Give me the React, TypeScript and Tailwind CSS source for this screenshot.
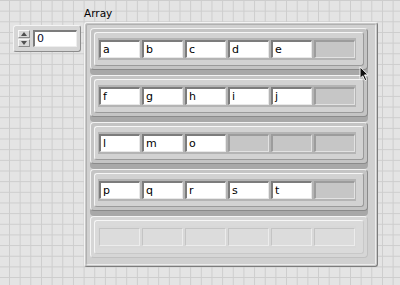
import React from "react";

const rows: (string | null)[][] = [
  ["a", "b", "c", "d", "e", null],
  ["f", "g", "h", "i", "j", null],
  ["l", "m", "o", null, null, null],
  ["p", "q", "r", "s", "t", null],
];

const Field = ({ text, dim }: { text: string | null; dim?: boolean }) => {
  if (dim) {
    return (
      <div className="w-[43px] h-[22px] px-[1px] py-[2px] bg-[#d8d8d8]">
        <div className="h-full border-t border-l border-[#c4c4c4] border-b border-r border-b-[#ececec] border-r-[#ececec] bg-[#dcdcdc]" />
      </div>
    );
  }
  return (
    <div className="w-[43px] h-[22px] px-[1px] py-[2px] bg-[#b4b4b4]">
      {text === null ? (
        <div className="h-full border-t-2 border-l-2 border-[#9c9c9c] border-b border-r border-b-[#e2e2e2] border-r-[#e2e2e2] bg-[#c6c6c6]" />
      ) : (
        <div className="h-full border-t-2 border-l-2 border-[#7c7c7c] border-b border-r border-b-[#e8e8e8] border-r-[#e8e8e8] bg-white pl-[2px] text-[11px] leading-[15px] text-black">
          {text}
        </div>
      )}
    </div>
  );
};

const Cluster = ({ items, dim }: { items: (string | null)[]; dim?: boolean }) => (
  <div
    className={
      dim
        ? "w-[278px] h-[42px] rounded-[4px] border border-[#f4f4f4] border-b-[#c0c0c0] border-r-[#c0c0c0] bg-[#d6d6d6] p-[3px]"
        : "w-[278px] h-[42px] rounded-[4px] border border-[#f2f2f2] border-b-[#8a8a8a] border-r-[#8a8a8a] bg-[#c4c4c4] p-[3px] shadow-[0_5px_0_#a8a8a8]"
    }
  >
    <div
      className={
        dim
          ? "h-full rounded-[3px] border border-[#f6f6f6] border-b-[#c8c8c8] border-r-[#c8c8c8] bg-[#dadada] flex items-center pl-[3px]"
          : "h-full rounded-[3px] border border-[#f6f6f6] border-b-[#9a9a9a] border-r-[#9a9a9a] bg-[#d2d2d2] flex items-center pl-[3px]"
      }
    >
      {items.map((t, i) => (
        <Field key={i} text={t} dim={dim} />
      ))}
    </div>
  </div>
);

export default function App() {
  return (
    <div
      className="relative w-[400px] h-[285px] overflow-hidden bg-[#e4e4e4] bg-[linear-gradient(to_right,#cdcdcd_1px,transparent_1px),linear-gradient(to_bottom,#cdcdcd_1px,transparent_1px)] bg-[size:10.67px_10.67px] bg-[position:9px_0px]"
      style={{ fontFamily: '"DejaVu Sans", "Liberation Sans", sans-serif' }}
    >
      <div className="flex items-start">
        {/* Index display */}
        <div className="ml-[13px] mt-[25px] w-[68px] h-[27px] rounded-[3px] border border-[#f4f4f4] border-b-[#8c8c8c] border-r-[#8c8c8c] bg-[#d6d6d6] flex items-center pl-[4px] gap-[3px]">
          <div className="flex flex-col gap-[1px]">
            <div className="w-[12px] h-[8px] border border-[#f8f8f8] border-b-[#8c8c8c] border-r-[#8c8c8c] bg-[#d8d8d8] flex items-center justify-center">
              <svg width="6" height="4" viewBox="0 0 6 4">
                <path d="M3 0 L6 4 L0 4 Z" fill="#505050" />
              </svg>
            </div>
            <div className="w-[12px] h-[8px] border border-[#f8f8f8] border-b-[#8c8c8c] border-r-[#8c8c8c] bg-[#d8d8d8] flex items-center justify-center">
              <svg width="6" height="4" viewBox="0 0 6 4">
                <path d="M0 0 L6 0 L3 4 Z" fill="#505050" />
              </svg>
            </div>
          </div>
          <div className="w-[44px] h-[17px] border-t-2 border-l-2 border-[#7c7c7c] border-b border-r border-b-[#eeeeee] border-r-[#eeeeee] bg-white pl-[2px] text-[11px] leading-[14px] text-[#0a0a2a]">
            0
          </div>
        </div>

        {/* Array */}
        <div className="ml-[3px] mt-[6px] flex flex-col">
          <div className="h-[16px] text-[10.5px] leading-[15px] text-black">Array</div>
          <div className="w-[294px] h-[245px] rounded-[3px] border border-[#f4f4f4] border-b-[#7c7c7c] border-r-[#7c7c7c] bg-[#c8c8c8] p-[1px]">
            <div className="h-full rounded-[2px] border border-[#b0b0b0] border-b-[#ececec] border-r-[#ececec] bg-[#d0d0d0] pl-[3px] pt-[3px] flex flex-col gap-[5px]">
              {rows.map((r, i) => (
                <Cluster key={i} items={r} />
              ))}
              <Cluster items={[null, null, null, null, null, null]} dim />
            </div>
          </div>
        </div>
      </div>

      {/* mouse cursor */}
      <svg className="absolute left-[359px] top-[66px]" width="11" height="16" viewBox="0 0 12 18">
        <path d="M1 1 L1 14 L4 11 L6.5 16.5 L8.5 15.5 L6 10 L10 10 Z" fill="#111" stroke="#fff" strokeWidth="1" />
      </svg>
    </div>
  );
}
